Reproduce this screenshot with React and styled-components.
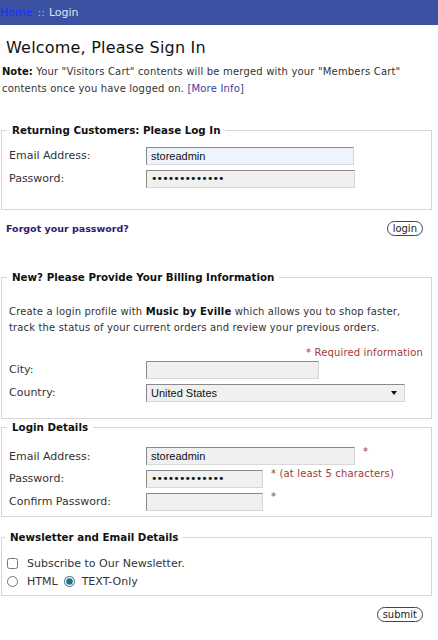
import React from 'react';
import styled, { createGlobalStyle } from 'styled-components';

const Global = createGlobalStyle`
  html, body { margin: 0; padding: 0; background: #fff; }
  body { font-family: "DejaVu Sans", Verdana, sans-serif; font-size: 10px; color: #333; }
  * { box-sizing: border-box; }
`;

const Page = styled.div`
  width: 438px;
  height: 640px;
  overflow: hidden;
  background: #fff;
`;

const NavBar = styled.div`
  height: 25px;
  background: #3b52a2;
  display: flex;
  align-items: center;
  font-size: 11px;
  color: #dfe4f4;
`;

const NavLink = styled.a`
  color: #1c2dff;
  text-decoration: none;
`;

const Sep = styled.span`
  color: #aab4de;
  margin: 0 4px 0 5px;
`;

const Content = styled.div`
  padding: 0 6px 0 1px;
`;

const Title = styled.h1`
  margin: 13px 0 0 5px;
  font-size: 16px;
  font-weight: normal;
  color: #111;
  letter-spacing: 0.2px;
`;

const Note = styled.p`
  margin: 6px 0 0 1px;
  line-height: 17px;
  color: #333;
  letter-spacing: 0.18px;
`;

const Strong = styled.strong`
  color: #111;
  letter-spacing: 0;
`;

const InfoLink = styled.a`
  color: #3d3d9e;
  text-decoration: none;
`;

const Box = styled.fieldset`
  margin: ${p => p.$mt}px 0 0 0;
  padding: ${p => p.$pt}px 8px ${p => p.$pb}px ${p => p.$pl ?? 7}px;
  width: 431px;
  border: 1px solid #d6d6d6;
  min-width: 0;
`;

const Legend = styled.legend`
  font-weight: bold;
  font-size: 10.3px;
  color: #111;
  padding: 0 5px;
  margin-left: -2px;
`;

const Row = styled.div`
  display: flex;
  align-items: center;
  height: ${p => p.$h || 23}px;
`;

const Label = styled.label`
  width: 137px;
  flex: none;
  font-size: 11px;
  color: #333;
`;

const TextInput = styled.input`
  width: ${p => p.$w}px;
  height: 18px;
  margin: 0;
  padding: 0 4px;
  border: 1px solid;
  border-color: #8a8a8a #d8d8d8 #d8d8d8 #8a8a8a;
  background: ${p => (p.$tint ? '#eef4fb' : '#f0f0f0')};
  font-family: "Liberation Sans", Arial, sans-serif;
  font-size: 11px;
  color: #111;
  outline: none;

  &[type='password'] {
    font-family: "DejaVu Sans", sans-serif;
    font-size: 11px;
    letter-spacing: -0.9px;
  }
`;

const Required = styled.span`
  margin-left: 8px;
  color: #a03a3a;
  font-size: 10px;
  align-self: flex-start;
  margin-top: ${p => p.$top || 1}px;
  letter-spacing: 0.15px;
`;

const RequiredNote = styled.div`
  text-align: right;
  color: #a03a3a;
  margin-top: 11px;
  letter-spacing: 0.15px;
`;

const Para = styled.p`
  margin: 21px 0 0 0;
  line-height: 16px;
  color: #333;
  letter-spacing: 0.15px;
`;

const Brand = styled.b`
  color: #111;
`;

const ActionRow = styled.div`
  display: flex;
  justify-content: space-between;
  align-items: center;
  margin: ${p => p.$mt}px 9px 0 5px;
`;

const Forgot = styled.a`
  font-weight: bold;
  font-size: 9.5px;
  color: #2e1a72;
  text-decoration: none;
`;

const Pill = styled.button`
  font-family: "DejaVu Sans", Verdana, sans-serif;
  font-size: 10px;
  color: #222;
  background: #fff;
  border: 1px solid #444;
  border-radius: 999px;
  padding: 0 5px;
  height: 15px;
  line-height: 13px;
  margin-left: auto;
`;

const SelectWrap = styled.div`
  position: relative;
  width: 259px;
  height: 18px;
`;

const Select = styled.select`
  appearance: none;
  width: 100%;
  height: 100%;
  margin: 0;
  padding: 0 4px;
  border: 1px solid;
  border-color: #8a8a8a #d8d8d8 #d8d8d8 #8a8a8a;
  background: #f0f0f0;
  font-family: "Liberation Sans", Arial, sans-serif;
  font-size: 11px;
  color: #111;
  outline: none;
`;

const Arrow = styled.span`
  position: absolute;
  right: 8px;
  top: 7px;
  width: 0;
  height: 0;
  border-left: 3.5px solid transparent;
  border-right: 3.5px solid transparent;
  border-top: 4px solid #111;
  pointer-events: none;
`;

const CheckRow = styled.div`
  display: flex;
  align-items: center;
  height: 18px;
  font-size: 11px;
  color: #333;
`;

const Check = styled.input`
  margin: 0 ${p => p.$gap}px 0 ${p => p.$before || 0}px;
  width: 11px;
  height: 11px;
  accent-color: #2c6a8a;
`;

const SubmitRow = styled.div`
  display: flex;
  justify-content: flex-end;
  margin: 11px 9px 0 0;
`;

export default function App() {
  return (
    <Page>
      <Global />
      <NavBar>
        <NavLink href="#">Home</NavLink>
        <Sep>::</Sep>
        <span>Login</span>
      </NavBar>
      <Content>
        <Title>Welcome, Please Sign In</Title>
        <Note>
          <Strong>Note:</Strong> Your "Visitors Cart" contents will be merged with your "Members Cart"
          <br />
          contents once you have logged on. <InfoLink href="#">[More Info]</InfoLink>
        </Note>

        <Box $mt={27} $pt={8} $pb={19}>
          <Legend>Returning Customers: Please Log In</Legend>
          <Row>
            <Label>Email Address:</Label>
            <TextInput $w={208} $tint readOnly value="storeadmin" />
          </Row>
          <Row>
            <Label>Password:</Label>
            <TextInput $w={209} type="password" readOnly value="storeadmin123" />
          </Row>
        </Box>

        <ActionRow $mt={11}>
          <Forgot href="#">Forgot your password?</Forgot>
          <Pill>login</Pill>
        </ActionRow>

        <Box $mt={35} $pt={0} $pb={14}>
          <Legend>New? Please Provide Your Billing Information</Legend>
          <Para>
            Create a login profile with <Brand>Music by Eville</Brand> which allows you to shop faster,
            <br />
            track the status of your current orders and review your previous orders.
          </Para>
          <RequiredNote>* Required information</RequiredNote>
          <Row>
            <Label>City:</Label>
            <TextInput $w={173} />
          </Row>
          <Row>
            <Label>Country:</Label>
            <SelectWrap>
              <Select defaultValue="us">
                <option value="us">United States</option>
              </Select>
              <Arrow />
            </SelectWrap>
          </Row>
        </Box>

        <Box $mt={2} $pt={12} $pb={3}>
          <Legend>Login Details</Legend>
          <Row $h={22}>
            <Label>Email Address:</Label>
            <TextInput $w={209} readOnly value="storeadmin" />
            <Required $top={0}>*</Required>
          </Row>
          <Row>
            <Label>Password:</Label>
            <TextInput $w={117} type="password" readOnly value="storeadmin123" />
            <Required $top={1}>* (at least 5 characters)</Required>
          </Row>
          <Row>
            <Label>Confirm Password:</Label>
            <TextInput $w={117} type="password" />
            <Required $top={1}>*</Required>
          </Row>
        </Box>

        <Box $mt={14} $pt={11} $pb={5} $pl={5}>
          <Legend>Newsletter and Email Details</Legend>
          <CheckRow>
            <Check type="checkbox" $gap={9} />
            <span>Subscribe to Our Newsletter.</span>
          </CheckRow>
          <CheckRow>
            <Check type="radio" name="fmt" $gap={9} />
            <span>HTML</span>
            <Check type="radio" name="fmt" defaultChecked $gap={7} $before={6} />
            <span>TEXT-Only</span>
          </CheckRow>
        </Box>

        <SubmitRow>
          <Pill>submit</Pill>
        </SubmitRow>
      </Content>
    </Page>
  );
}
